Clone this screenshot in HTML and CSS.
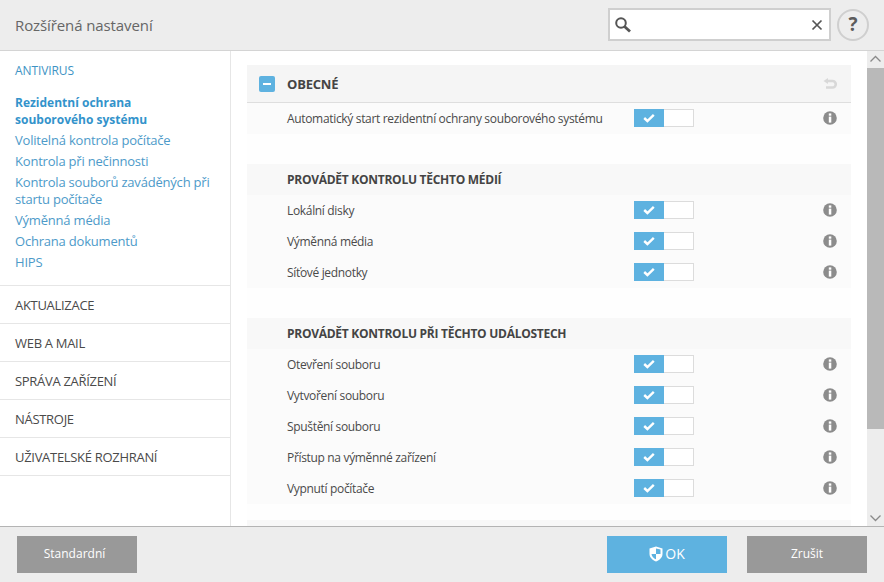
FILE: index.html
```html
<!DOCTYPE html>
<html lang="cs">
<head>
<meta charset="utf-8">
<title>Rozšířená nastavení</title>
<link rel="stylesheet" href="styles.css">
</head>
<body>
<svg class="defs" width="0" height="0" aria-hidden="true">
  <symbol id="info" viewBox="0 0 14 14"><circle cx="7" cy="7" r="6.8" fill="#8c8c8c"/><rect x="5.8" y="2.4" width="2.5" height="2.3" fill="#fff"/><rect x="5.8" y="5.6" width="2.5" height="6" fill="#fff"/></symbol>
  <symbol id="check" viewBox="0 0 12 10"><path d="M1.2 5 4.4 8 10.8 1.8" fill="none" stroke="#fff" stroke-width="2.4"/></symbol>
</svg>
<div class="app">
  <header class="top">
    <h1 class="title">Rozšířená nastavení</h1>
    <div class="search">
      <svg class="search-ico" width="18" height="18" viewBox="0 0 18 18"><circle cx="7" cy="7" r="4.8" fill="none" stroke="#555" stroke-width="2"/><path d="M10.5 10.5 16 15.5" stroke="#555" stroke-width="2.8"/></svg>
      <svg class="search-x" width="12" height="12" viewBox="0 0 12 12"><path d="M1.5 1.5 10.5 10.5M10.5 1.5 1.5 10.5" stroke="#555" stroke-width="1.7"/></svg>
    </div>
    <div class="help">?</div>
  </header>
  <div class="main">
    <nav class="side">
      <div class="group open">
        <div class="group-title">ANTIVIRUS</div>
        <a class="link active">Rezidentní ochrana<br>souborového systému</a>
        <a class="link">Volitelná kontrola počítače</a>
        <a class="link">Kontrola při nečinnosti</a>
        <a class="link">Kontrola souborů zaváděných při startu počítače</a>
        <a class="link">Výměnná média</a>
        <a class="link">Ochrana dokumentů</a>
        <a class="link">HIPS</a>
      </div>
      <div class="item">AKTUALIZACE</div>
      <div class="item">WEB A MAIL</div>
      <div class="item">SPRÁVA ZAŘÍZENÍ</div>
      <div class="item">NÁSTROJE</div>
      <div class="item">UŽIVATELSKÉ ROZHRANÍ</div>
    </nav>
    <section class="content">
      <div class="panel">
        <div class="panel-head">
          <span class="minus"><span class="minus-bar"></span></span>
          <span class="panel-title">OBECNÉ</span>
          <svg class="undo" width="14" height="12" viewBox="0 0 14 12"><path d="M4 3H9.5A3.2 3.2 0 0 1 9.5 9.5H3" fill="none" stroke="#d8d8d8" stroke-width="2.6"/><path d="M0.5 3 5 0V6Z" fill="#d8d8d8"/></svg>
        </div>
        <div class="row"><span class="label">Automatický start rezidentní ochrany souborového systému</span><span class="toggle"><span class="on"><svg width="12" height="10"><use href="#check"/></svg></span></span><svg class="info" width="14" height="14"><use href="#info"/></svg></div>
        <div class="gap"></div>
        <div class="subhead">PROVÁDĚT KONTROLU TĚCHTO MÉDIÍ</div>
        <div class="row"><span class="label">Lokální disky</span><span class="toggle"><span class="on"><svg width="12" height="10"><use href="#check"/></svg></span></span><svg class="info" width="14" height="14"><use href="#info"/></svg></div>
        <div class="row"><span class="label">Výměnná média</span><span class="toggle"><span class="on"><svg width="12" height="10"><use href="#check"/></svg></span></span><svg class="info" width="14" height="14"><use href="#info"/></svg></div>
        <div class="row"><span class="label">Síťové jednotky</span><span class="toggle"><span class="on"><svg width="12" height="10"><use href="#check"/></svg></span></span><svg class="info" width="14" height="14"><use href="#info"/></svg></div>
        <div class="gap"></div>
        <div class="subhead">PROVÁDĚT KONTROLU PŘI TĚCHTO UDÁLOSTECH</div>
        <div class="row"><span class="label">Otevření souboru</span><span class="toggle"><span class="on"><svg width="12" height="10"><use href="#check"/></svg></span></span><svg class="info" width="14" height="14"><use href="#info"/></svg></div>
        <div class="row"><span class="label">Vytvoření souboru</span><span class="toggle"><span class="on"><svg width="12" height="10"><use href="#check"/></svg></span></span><svg class="info" width="14" height="14"><use href="#info"/></svg></div>
        <div class="row"><span class="label">Spuštění souboru</span><span class="toggle"><span class="on"><svg width="12" height="10"><use href="#check"/></svg></span></span><svg class="info" width="14" height="14"><use href="#info"/></svg></div>
        <div class="row"><span class="label">Přístup na výměnné zařízení</span><span class="toggle"><span class="on"><svg width="12" height="10"><use href="#check"/></svg></span></span><svg class="info" width="14" height="14"><use href="#info"/></svg></div>
        <div class="row"><span class="label">Vypnutí počítače</span><span class="toggle"><span class="on"><svg width="12" height="10"><use href="#check"/></svg></span></span><svg class="info" width="14" height="14"><use href="#info"/></svg></div>
        <div class="gap short"></div>
        <div class="subhead"></div>
      </div>
      <div class="scrollbar">
        <svg class="arrow" width="17" height="17" viewBox="0 0 17 17"><path d="M3.5 10.5 8.5 5.5 13.5 10.5" fill="none" stroke="#8a8a8a" stroke-width="1.3"/></svg>
        <div class="thumb"></div>
        <div class="track"></div>
        <svg class="arrow" width="17" height="17" viewBox="0 0 17 17"><path d="M3.5 6.5 8.5 11.5 13.5 6.5" fill="none" stroke="#8a8a8a" stroke-width="1.3"/></svg>
      </div>
    </section>
  </div>
  <footer class="bottom">
    <button class="btn grey std">Standardní</button>
    <span class="spacer"></span>
    <button class="btn blue"><svg class="shield" width="14" height="16" viewBox="0 0 14 16"><path d="M7 0.5 13.5 2.5V8C13.5 11.5 10.5 14 7 15.5 3.5 14 0.5 11.5 0.5 8V2.5Z" fill="#fff"/><path d="M7 2.5V8H2.5C2.7 10.5 4.8 12.3 7 13.3V8H11.5V3.6Z" fill="#5eb2e0"/></svg>OK</button>
    <button class="btn grey">Zrušit</button>
  </footer>
</div>
</body>
</html>
```

FILE: styles.css
```css
* { box-sizing: border-box; }
html, body { margin: 0; padding: 0; }
body { width: 884px; height: 582px; overflow: hidden; font-family: "Open Sans", "Liberation Sans", sans-serif; font-size: 12px; color: #4a4a4a; background: #fff; }
.defs { position: absolute; }
.app { display: flex; flex-direction: column; height: 582px; }

.top { height: 51px; flex: none; display: flex; align-items: flex-start; background: #ededed; border-bottom: 1px solid #d4d4d4; padding: 8px 15px 0 15px; }
.title { flex: 1; margin: 0; padding-top: 7px; font-size: 15px; line-height: 20px; font-weight: 400; letter-spacing: -0.1px; color: #666; }
.search { width: 223px; height: 33px; background: #fff; border: 2px solid #cfcfcf; display: flex; align-items: center; justify-content: space-between; padding: 0 6px 0 4px; }
.help { width: 32px; height: 32px; margin: 1px 0 0 6px; border: 2px solid #cfcfcf; border-radius: 50%; text-align: center; font-size: 19px; line-height: 27px; font-weight: 700; color: #5c5c5c; }

.main { flex: 1; min-height: 0; display: flex; }
.side { width: 231px; flex: none; border-right: 1px solid #e6e6e6; }
.group { padding: 11px 0 10px 15px; border-bottom: 1px solid #e6e6e6; }
.group-title { font-size: 12px; line-height: 17px; letter-spacing: -0.1px; color: #3e93c4; margin-bottom: 15px; }
.link { display: block; font-size: 13px; line-height: 17px; letter-spacing: -0.2px; padding: 0 15px 4px 0; color: #4d9ac9; }
.link.active { font-weight: 700; font-size: 12px; letter-spacing: 0; color: #3393cb; }
.item { height: 38px; line-height: 38px; padding-left: 15px; border-bottom: 1px solid #e6e6e6; font-size: 13px; letter-spacing: -0.3px; color: #4a4a4a; }

.content { flex: 1; display: flex; min-width: 0; padding-left: 16px; }
.panel { width: 604px; padding-top: 14px; flex: none; margin-right: 16px; overflow: hidden; }
.panel-head { height: 38px; display: flex; align-items: center; background: #f5f5f5; border-bottom: 1px solid #dedede; padding: 0 14px 0 12px; }
.minus { width: 16px; height: 16px; background: #5eb2e0; border-radius: 2px; display: flex; align-items: center; justify-content: center; }
.minus-bar { width: 8px; height: 2px; background: #fff; }
.panel-title { flex: 1; margin-left: 12px; font-weight: 700; font-size: 13px; letter-spacing: -0.2px; color: #444; }
.row { height: 31px; display: flex; align-items: center; background: #fbfbfb; padding: 0 14px 0 40px; }
.label { width: 347px; flex: none; padding-bottom: 1px; letter-spacing: -0.33px; color: #4a4a4a; }
.toggle { width: 60px; height: 18px; margin-bottom: 1px; flex: none; background: #fff; border: 1px solid #dcdcdc; }
.on { display: flex; width: 30px; height: 18px; margin: -1px 0 0 -1px; background: #5eb2e0; align-items: center; justify-content: center; }
.info { margin-left: auto; margin-bottom: 2px; }
.gap { height: 30px; background: #fefefe; }
.gap.short { height: 16px; }
.subhead { height: 31px; line-height: 31px; padding-left: 40px; background: #f8f8f8; font-weight: 700; letter-spacing: -0.27px; color: #444; }

.scrollbar { width: 17px; flex: none; display: flex; flex-direction: column; background: #ededed; }
.arrow { flex: none; }
.thumb { height: 361px; flex: none; background: #b9b9b9; }
.track { flex: 1; }

.bottom { height: 56px; flex: none; display: flex; align-items: flex-start; gap: 20px; background: #ededed; border-top: 1px solid #b4b4b4; padding: 9px 17px 0; }
.spacer { flex: 1; }
.btn { width: 120px; height: 37px; border: 0; padding: 0 0 2px; color: #fff; font-family: inherit; font-size: 12px; }
.btn.std { padding-right: 5px; }
.btn.grey { background: #999; }
.btn.blue { background: #5eb2e0; font-size: 14px; display: flex; align-items: center; justify-content: center; }
.shield { margin-right: 2px; }
```
